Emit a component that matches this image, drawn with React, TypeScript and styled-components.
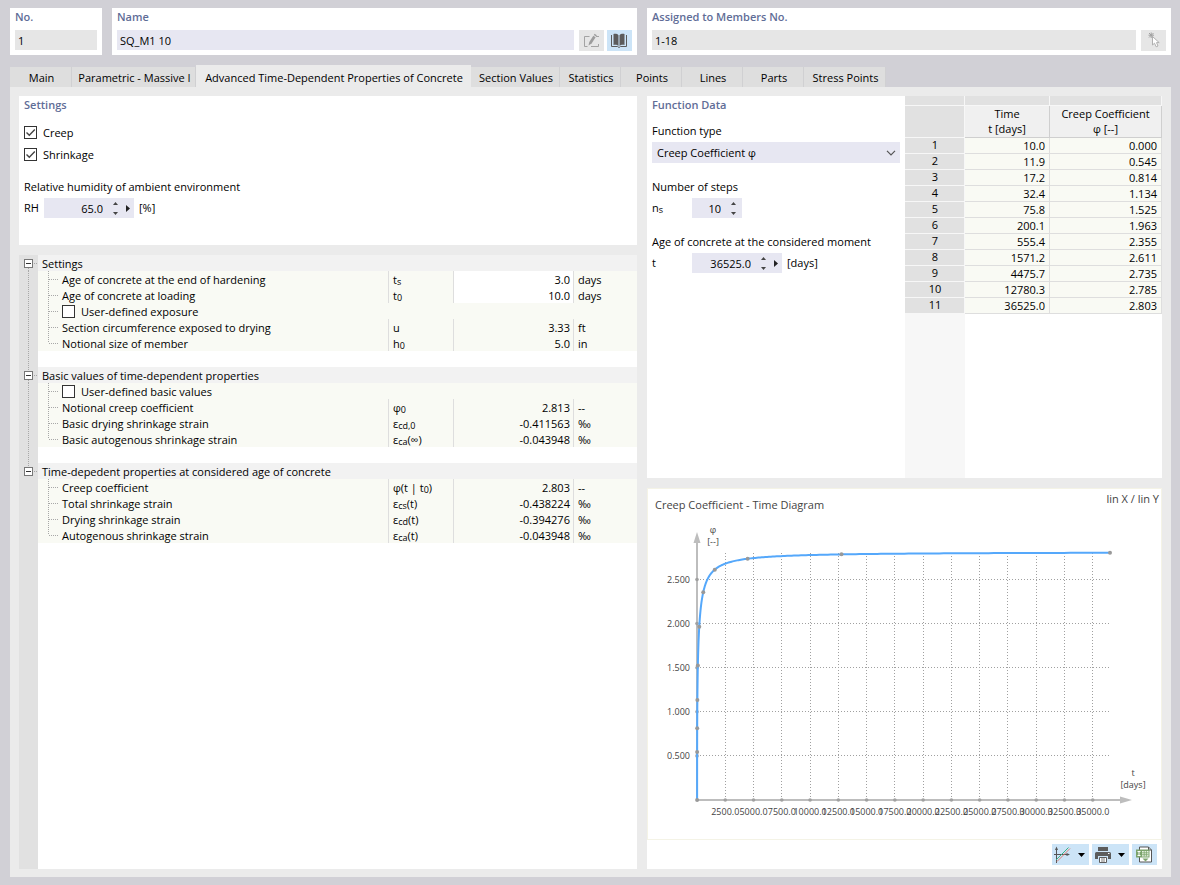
import React, { useState } from "react";
import styled, { createGlobalStyle, css } from "styled-components";

const color = {
  page: "#d1d0d6",
  panel: "#ebebeb",
  tab: "#dedede",
  tabLine: "#d0d0d2",
  title: "#5f6d97",
  field: "#e7e7f2",
  fieldOff: "#e6e6e6",
  active: "#cce4f7",
  head: "#f2f2f2",
  cell: "#f9faf4",
  gutter: "#e1e1e1",
  line: "#dedede",
};

const GlobalStyle = createGlobalStyle`
  *, *::before, *::after { box-sizing: border-box; }
  body {
    margin: 0;
    background: ${color.page};
    color: #000;
    font: 11px/16px "Open Sans", "Noto Sans", sans-serif;
  }
  input, select, button { font: inherit; color: inherit; }
`;

/* ---------- page frame ---------- */

const Page = styled.main`
  display: flex;
  flex-direction: column;
  min-height: 100vh;
  padding: 8px 9px 8px 10px;
`;

const TopBar = styled.header`
  display: grid;
  grid-template-columns: 92px minmax(0, 525fr) minmax(0, 524fr);
  gap: 10px;
`;

const TopCard = styled.section`
  padding: 0 5px 4px;
  background: #fff;
`;

const titleText = css`
  color: ${color.title};
  font-size: 11px;
  font-weight: 600;
  line-height: 18px;
`;

const Title = styled.h2`
  margin: 0;
  ${titleText}
`;

const TitleLabel = styled.label`
  display: block;
  margin-bottom: 4px;
  ${titleText}
`;

const FieldRow = styled.div`
  display: flex;
  align-items: flex-start;
  gap: 3px;
  min-height: 21px;
`;

const TextInput = styled.input<{ $gap?: boolean }>`
  flex: 1;
  min-width: 0;
  height: 20px;
  margin-right: ${(p) => (p.$gap ? 2 : 0)}px;
  padding: 0 3px;
  border: 0;
  background: ${color.field};
  &:read-only { background: ${color.fieldOff}; }
`;

const ToolButton = styled.button<{ $wide?: boolean; $off?: boolean }>`
  display: flex;
  flex: none;
  align-items: center;
  justify-content: center;
  gap: 7px;
  width: ${(p) => (p.$wide ? 37 : 25)}px;
  height: 21px;
  padding: 0 ${(p) => (p.$wide ? 2 : 0)}px 0 0;
  border: 0;
  background: ${(p) => (p.$off ? color.fieldOff : color.active)};
`;

const TabList = styled.nav`
  display: flex;
  align-items: flex-end;
  height: 22px;
  margin-top: 10px;
`;

const Tab = styled.button<{ $width: number; $active?: boolean }>`
  width: ${(p) => p.$width}px;
  height: 20px;
  padding: 2px 0 0 2px;
  overflow: hidden;
  border: 0;
  border-right: 1px solid ${color.tabLine};
  background: ${color.tab};
  text-align: center;
  white-space: nowrap;
  ${(p) =>
    p.$active &&
    css`
      height: 22px;
      padding-top: 4px;
      border-right-color: ${color.panel};
      background: ${color.panel};
    `}
`;

const Workspace = styled.div`
  display: grid;
  flex: 1;
  grid-template-columns: minmax(0, 618fr) minmax(0, 515fr);
  gap: 10px;
  padding: 9px 9px 8px;
  background: ${color.panel};
`;

const Column = styled.div`
  display: flex;
  flex-direction: column;
  gap: 10px;
`;

/* ---------- form parts ---------- */

const SettingsPanel = styled.section`
  min-height: 149px;
  padding: 0 5px;
  background: #fff;
`;

const CheckList = styled.div`
  display: flex;
  flex-direction: column;
  margin: 7px 0 14px;
`;

const CheckLabel = styled.label<{ $dense?: boolean }>`
  display: inline-flex;
  align-items: center;
  gap: 6px;
  height: ${(p) => (p.$dense ? 16 : 22)}px;
`;

const CheckBoxFrame = styled.span`
  display: grid;
  width: 13px;
  height: 13px;
  & > * { grid-area: 1 / 1; }
  & > svg { pointer-events: none; }
`;

const CheckInput = styled.input`
  width: 13px;
  height: 13px;
  margin: 0;
  border: 1px solid #333;
  background: #fff;
  appearance: none;
`;

const Caption = styled.label<{ $gap?: boolean }>`
  display: block;
  margin: ${(p) => (p.$gap ? 16 : 0)}px 0 3px;
`;

const InlineField = styled.div<{ $labelWidth: number }>`
  display: grid;
  grid-template-columns: ${(p) => p.$labelWidth}px max-content 1fr;
  align-items: center;
  height: 20px;
`;

const Unit = styled.span`
  padding-left: 5px;
`;

const SpinBox = styled.span<{ $width: number }>`
  display: flex;
  width: ${(p) => p.$width}px;
  height: 20px;
  background: ${color.field};
`;

const SpinInput = styled.input<{ $width: number }>`
  width: ${(p) => p.$width}px;
  padding: 2px 3px 0 0;
  border: 0;
  background: transparent;
  text-align: right;
`;

const SpinButtons = styled.span`
  display: flex;
  flex-direction: column;
  width: 18px;
`;

const PlainButton = styled.button`
  display: flex;
  flex: 1;
  align-items: center;
  justify-content: center;
  min-width: 0;
  padding: 0;
  border: 0;
  background: none;
`;

const StepMenu = styled(PlainButton)`
  flex: none;
  width: 8px;
`;

const SelectFrame = styled.span`
  display: grid;
  align-items: center;
  width: 100%;
  & > * { grid-area: 1 / 1; }
  & > svg { justify-self: end; margin-right: 4px; pointer-events: none; }
`;

const Select = styled.select`
  width: 100%;
  height: 21px;
  padding: 0 20px 0 5px;
  border: 0;
  border-radius: 0;
  background: ${color.field};
  appearance: none;
`;

/* ---------- property tree ---------- */

const TreePanel = styled.section`
  flex: 1;
  background: linear-gradient(to right, ${color.gutter} 19px, #fff 19px);
`;

const TreeTable = styled.table`
  width: 100%;
  border-collapse: separate;
  border-spacing: 0;
  table-layout: fixed;
  td, th { height: 16px; padding: 0; font-weight: 400; text-align: left; white-space: nowrap; }
  svg { display: block; flex: none; }
`;

const GutterCell = styled.td`
  width: 19px;
`;

const GroupHead = styled.th`
  background: ${color.head};
`;

const GroupTitle = styled.span`
  display: flex;
  align-items: center;
  height: 16px;
  padding: 2px 0 0 4px;
`;

const Cell = styled.td<{ $divided?: boolean; $editable?: boolean; $number?: boolean }>`
  background: ${(p) => (p.$editable ? "#fff" : color.cell)};
  border-left: ${(p) => (p.$divided ? `1px solid ${color.line}` : "0")};
  line-height: 14px;
  ${(p) => p.$divided && !p.$number && css`&& { padding: 2px 0 0 4px; }`}
  ${(p) => p.$number && css`&& { padding: 2px 3px 0 0; text-align: right; }`}
`;

const NameContent = styled.span`
  display: flex;
  align-items: center;
  gap: 2px;
  height: 16px;
`;

const NameText = styled.span`
  padding-top: 2px;
`;

const ToggleButton = styled.button`
  display: block;
  width: 19px;
  height: 16px;
  padding: 0;
  border: 0;
  background: none;
`;

const Sub = styled.sub`
  position: relative;
  top: 1px;
  font-size: 9px;
  line-height: 0;
  vertical-align: baseline;
`;

/* ---------- function data ---------- */

const FunctionPanel = styled.section`
  display: flex;
  min-height: 382px;
  background: #fff;
`;

const FunctionForm = styled.div`
  flex: 1;
  padding: 0 5px;
  & > h2 { margin-bottom: 9px; }
`;

const DataArea = styled.div`
  flex: none;
  width: 257px;
  background: linear-gradient(to right, #f7f7f7 60px, #fff 60px);
`;

const DataTable = styled.table`
  width: 100%;
  border-collapse: separate;
  border-spacing: 0;
  table-layout: fixed;
  th, td { height: 16px; padding: 0; font-weight: 400; line-height: 14px; }
  td {
    padding: 1px 4px 0 0;
    border-right: 1px solid ${color.line};
    border-bottom: 1px solid ${color.line};
    background: ${color.cell};
    text-align: right;
  }
  tbody th {
    padding: 0 0 1px 1px;
    border-right: 1px solid #f7f7f7;
    border-bottom: 1px solid #f7f7f7;
    background: ${color.gutter};
  }
`;

const StripRow = styled.tr`
  && th {
    height: 10px;
    border-right: 1px solid #f7f7f7;
    border-bottom: 1px solid #f7f7f7;
    background: ${color.gutter};
  }
`;

const HeadRow = styled.tr`
  && th {
    height: 32px;
    padding-bottom: 1px;
    border-right: 1px solid #cfcfcf;
    border-bottom: 1px solid #cfcfcf;
    background: #f0f0f0;
    line-height: 15px;
  }
  && th:first-child {
    border-color: #f7f7f7;
    background: ${color.gutter};
  }
`;

/* ---------- diagram ---------- */

const DiagramPanel = styled.section`
  display: flex;
  flex: 1;
  flex-direction: column;
  background: #fff;
`;

const DiagramFrame = styled.div`
  flex: 1;
  border: 1px solid #f4f3e6;
`;

const Diagram = styled.svg`
  display: block;
  width: 100%;
  fill: #444;
  font-size: 9px;
`;

const DiagramTools = styled.div`
  display: flex;
  justify-content: flex-end;
  gap: 3px;
  padding: 4px 5px;
`;

/* ---------- small drawings ---------- */

const UpArrow = () => (
  <svg width="5" height="3" viewBox="0 0 5 3"><path d="M0 3 2.5 0 5 3z" fill="#444" /></svg>
);
const DownArrow = () => (
  <svg width="5" height="3" viewBox="0 0 5 3"><path d="M0 0h5L2.5 3z" fill="#444" /></svg>
);
const RightArrow = () => (
  <svg width="4" height="7" viewBox="0 0 4 7"><path d="M0 0 4 3.5 0 7z" fill="#222" /></svg>
);
const MenuArrow = () => (
  <svg width="7" height="4" viewBox="0 0 7 4"><path d="M0 0h7L3.5 4z" fill="#000" /></svg>
);
const Chevron = () => (
  <svg width="10" height="6" viewBox="0 0 10 6"><path d="M1 .8 5 4.8 9 .8" fill="none" stroke="#555" strokeWidth="1.2" /></svg>
);
const CheckMark = () => (
  <svg width="13" height="13" viewBox="0 0 13 13"><path d="M2.5 6.5 5.3 9.3 10.8 3.5" fill="none" stroke="#444" strokeWidth="1.4" /></svg>
);

const EditIcon = () => (
  <svg width="17" height="15" viewBox="0 0 17 15" fill="none" stroke="#a3a3a3">
    <path d="M6.500 3.500H1.500V13.500H4.500M8 13.500H15.500V11M13 3.500H16" />
    <path d="M5.500 12.500 6.300 9 10.300 2.800 12.600 4.200 8.600 10.500z" fill="#9c9c9c" stroke="none" />
    <path d="M10.800 2 11.600 .8 13.800 2.200 13.100 3.400z" fill="#9c9c9c" stroke="none" />
  </svg>
);

const BookIcon = () => (
  <svg width="17" height="15" viewBox="0 0 17 15">
    <path d="M2.500 1C4.500 .6 6.500 1 7.500 2.200V13C6.500 12 4.500 11.600 2.500 12zM13.500 1C11.500 .6 9.500 1 8.500 2.200V13C9.500 12 11.500 11.600 13.500 12z" fill="#5c5c5c" />
    <path d="M.5 2V13.500H6.500L8 14.500 9.500 13.500H15.500V2" fill="none" stroke="#5c5c5c" />
  </svg>
);

const PickIcon = () => (
  <svg width="13" height="17" viewBox="0 0 13 17">
    <path d="M2 1 6.500 5.500M6.500 1 2 5.500M4.200 .5V6M1.500 3.200H7" stroke="#a0a0a0" fill="none" />
    <path d="M5.500 4.500V13L7.500 11.200 9.200 14.800 11 14 9.500 10.600H12.200z" fill="#fff" stroke="#b0b0b0" />
  </svg>
);

const ScaleIcon = () => (
  <svg width="17" height="17" viewBox="0 0 17 17" fill="none">
    <path d="M2.500 2V17M0 8.500H14" stroke="#555" />
    <path d="M2.500 .5 4 4H1zM16 8.500 12.500 7V10z" fill="#555" />
    <path d="M2 14 14.500 1.500" stroke="#3bb08a" />
    <path d="M3 15.500 16 2.500" stroke="#dd7d72" />
  </svg>
);

const PrintIcon = () => (
  <svg width="16" height="16" viewBox="0 0 16 16">
    <path d="M3 0H13V4H3zM1.500 5H14.500Q16 5 16 6.500V12H13V9H3V12H0V6.500Q0 5 1.500 5z" fill="#5c5c5c" />
    <path d="M13 6.500H14.500" stroke="#fff" />
    <path d="M4.500 10.500H11.500V15.500H4.500z" fill="#fff" stroke="#5c5c5c" />
    <path d="M6 12H10M6 14H10" stroke="#5c5c5c" strokeWidth=".8" />
  </svg>
);

const ExportIcon = () => (
  <svg width="17" height="17" viewBox="0 0 17 17" fill="none">
    <path d="M3.500 1H12.500L15.500 4V16H3.500z" fill="#fff" stroke="#555" />
    <path d="M12.500 1V4H15.500" stroke="#555" />
    <path d="M0 3.500H13.500V11.500H0z" fill="#7ba36c" />
    <path d="M1.500 5.500H4.500M3 5.500V9.500M1.500 9.500H4.500" stroke="#fff" />
    <path d="M6 5H12.500V10.500H6z" fill="#e9f3e4" />
    <path d="M8.200 5V10.500M10.400 5V10.500M6 6.800H12.500M6 8.700H12.500" stroke="#7ba36c" strokeWidth=".8" />
    <path d="M6.500 12.500H12.500L9.500 15.500z" fill="#7ba36c" />
  </svg>
);

const dots = { stroke: "#a8a8a8", strokeDasharray: "1 1", fill: "none" };

const Branch = ({ last }: { last: boolean }) => (
  <svg width="22" height="16" viewBox="0 0 22 16" shapeRendering="crispEdges">
    <path d={last ? "M10.500 0V8" : "M10.500 0V16"} {...dots} />
    <path d="M11 8.500H21" {...dots} />
  </svg>
);

const GutterLine = () => (
  <svg width="19" height="16" viewBox="0 0 19 16" shapeRendering="crispEdges">
    <path d="M9.500 0V16" {...dots} />
  </svg>
);

const ToggleGlyph = ({ first, last }: { first: boolean; last: boolean }) => (
  <svg width="19" height="16" viewBox="0 0 19 16" shapeRendering="crispEdges">
    {!first && <path d="M9.500 0V4" {...dots} />}
    {!last && <path d="M9.500 13V16" {...dots} />}
    <rect x="5.500" y="4.500" width="8" height="8" fill="#fff" stroke="#777" />
    <path d="M7 8.500H12" stroke="#333" />
    <path d="M15 8.500H19" {...dots} />
  </svg>
);

/* ---------- data ---------- */

const tabs: [string, number][] = [
  ["Main", 62],
  ["Parametric - Massive I", 124],
  ["Advanced Time-Dependent Properties of Concrete", 275],
  ["Section Values", 89],
  ["Statistics", 61],
  ["Points", 61],
  ["Lines", 61],
  ["Parts", 61],
  ["Stress Points", 82],
];

type Row = {
  name: string;
  check?: boolean;
  symbol?: React.ReactNode;
  value?: string;
  unit?: string;
  editable?: boolean;
};

const groups: { title: string; rows: Row[] }[] = [
  {
    title: "Settings",
    rows: [
      { name: "Age of concrete at the end of hardening", symbol: <>t<Sub>s</Sub></>, value: "3.0", unit: "days", editable: true },
      { name: "Age of concrete at loading", symbol: <>t<Sub>0</Sub></>, value: "10.0", unit: "days", editable: true },
      { name: "User-defined exposure", check: true },
      { name: "Section circumference exposed to drying", symbol: "u", value: "3.33", unit: "ft" },
      { name: "Notional size of member", symbol: <>h<Sub>0</Sub></>, value: "5.0", unit: "in" },
    ],
  },
  {
    title: "Basic values of time-dependent properties",
    rows: [
      { name: "User-defined basic values", check: true },
      { name: "Notional creep coefficient", symbol: <>φ<Sub>0</Sub></>, value: "2.813", unit: "--" },
      { name: "Basic drying shrinkage strain", symbol: <>ε<Sub>cd,0</Sub></>, value: "-0.411563", unit: "‰" },
      { name: "Basic autogenous shrinkage strain", symbol: <>ε<Sub>ca</Sub>(∞)</>, value: "-0.043948", unit: "‰" },
    ],
  },
  {
    title: "Time-depedent properties at considered age of concrete",
    rows: [
      { name: "Creep coefficient", symbol: <>φ(t | t<Sub>0</Sub>)</>, value: "2.803", unit: "--" },
      { name: "Total shrinkage strain", symbol: <>ε<Sub>cs</Sub>(t)</>, value: "-0.438224", unit: "‰" },
      { name: "Drying shrinkage strain", symbol: <>ε<Sub>cd</Sub>(t)</>, value: "-0.394276", unit: "‰" },
      { name: "Autogenous shrinkage strain", symbol: <>ε<Sub>ca</Sub>(t)</>, value: "-0.043948", unit: "‰" },
    ],
  },
];

const creep: [number, number][] = [
  [10.0, 0], [11.9, 0.545], [17.2, 0.814], [32.4, 1.134], [75.8, 1.525], [200.1, 1.963],
  [555.4, 2.355], [1571.2, 2.611], [4475.7, 2.735], [12780.3, 2.785], [36525.0, 2.803],
];

/* ---------- components ---------- */

function CheckBox({ label, initial = false, dense }: { label: string; initial?: boolean; dense?: boolean }) {
  const [on, setOn] = useState(initial);
  return (
    <CheckLabel $dense={dense}>
      <CheckBoxFrame>
        <CheckInput type="checkbox" checked={on} onChange={() => setOn(!on)} />
        {on && <CheckMark />}
      </CheckBoxFrame>
      <NameText>{label}</NameText>
    </CheckLabel>
  );
}

function Spin({ id, value, width, menu }: { id: string; value: string; width: number; menu?: boolean }) {
  return (
    <SpinBox $width={width}>
      <SpinInput id={id} $width={menu ? width - 28 : width - 18} defaultValue={value} />
      <SpinButtons>
        <PlainButton aria-label="Increase"><UpArrow /></PlainButton>
        <PlainButton aria-label="Decrease"><DownArrow /></PlainButton>
      </SpinButtons>
      {menu && <StepMenu aria-label="More"><RightArrow /></StepMenu>}
    </SpinBox>
  );
}

function PropertyTree() {
  return (
    <TreePanel>
      <TreeTable>
        <colgroup>
          <col width="19" />
          <col />
          <col width="65" />
          <col width="120" />
          <col width="64" />
        </colgroup>
        {groups.map((g, gi) => {
          const lastGroup = gi === groups.length - 1;
          return (
            <tbody key={g.title}>
              <tr>
                <GutterCell>
                  <ToggleButton aria-label={`Collapse ${g.title}`}>
                    <ToggleGlyph first={gi === 0} last={lastGroup} />
                  </ToggleButton>
                </GutterCell>
                <GroupHead colSpan={4} scope="rowgroup">
                  <GroupTitle>{g.title}</GroupTitle>
                </GroupHead>
              </tr>
              {g.rows.map((r, i) => (
                <tr key={r.name}>
                  <GutterCell>{!lastGroup && <GutterLine />}</GutterCell>
                  <Cell colSpan={r.check ? 4 : 1}>
                    <NameContent>
                      <Branch last={i === g.rows.length - 1} />
                      {r.check ? <CheckBox label={r.name} dense /> : <NameText>{r.name}</NameText>}
                    </NameContent>
                  </Cell>
                  {!r.check && (
                    <>
                      <Cell $divided>{r.symbol}</Cell>
                      <Cell $divided $number $editable={r.editable}>{r.value}</Cell>
                      <Cell $divided>{r.unit}</Cell>
                    </>
                  )}
                </tr>
              ))}
              {!lastGroup && (
                <tr>
                  <GutterCell><GutterLine /></GutterCell>
                  <td colSpan={4} />
                </tr>
              )}
            </tbody>
          );
        })}
      </TreeTable>
    </TreePanel>
  );
}

const px = (t: number) => 49 + (t * 413) / 36525;
const py = (v: number) => 311 - v * 88.2;

/* Creep development after EN 1992-1-1, Annex B */
const phi = (t: number) => 2.813 * Math.pow((t - 10) / (437 + t - 10), 0.3);

const curve = Array.from({ length: 241 }, (_, i) => {
  const t = 10 + 36515 * Math.pow(i / 240, 4);
  return `${i ? "L" : "M"}${px(t).toFixed(2)} ${py(phi(t)).toFixed(2)}`;
}).join("");

const xTicks = Array.from({ length: 14 }, (_, i) => (i + 1) * 2500);
const yTicks = [0.5, 1, 1.5, 2, 2.5];

function CreepDiagram() {
  return (
    <Diagram viewBox="0 0 513 350" role="img" aria-label="Creep coefficient over time">
      <text x="7" y="20" fontSize="11">Creep Coefficient - Time Diagram</text>
      <text x="511" y="14" fontSize="11" textAnchor="end">lin X / lin Y</text>
      <text x="65" y="44" textAnchor="middle">φ</text>
      <text x="65" y="56" textAnchor="middle">[--]</text>
      <text x="485" y="287" textAnchor="middle">t</text>
      <text x="485" y="299" textAnchor="middle">[days]</text>
      <g stroke="#a0a0a0" strokeDasharray="1 2">
        {xTicks.map((t) => <path key={t} d={`M${Math.floor(px(t)) + 0.5} 64V311`} />)}
        {yTicks.map((v) => <path key={v} d={`M49 ${Math.floor(py(v)) + 0.5}H462`} />)}
      </g>
      <path d="M49 311V52M49 311H474" stroke="#bdbdbd" strokeWidth="2" />
      <path d="M49 43 52.500 54H45.500zM484 311 472 307.500V314.500z" fill="#bdbdbd" />
      <g fill="#a0a0a0">
        {xTicks.map((t) => <circle key={t} cx={px(t)} cy="311" r="1.8" />)}
        {yTicks.map((v) => <circle key={v} cx="49" cy={py(v)} r="1.8" />)}
      </g>
      <path d={curve} fill="none" stroke="#55a8fb" strokeWidth="2" />
      <g fill="#999">
        {creep.map(([t, v]) => <circle key={t} cx={px(t)} cy={py(v)} r="2" />)}
      </g>
      {yTicks.map((v) => (
        <text key={v} x="42" y={py(v) + 3} textAnchor="end">{v.toFixed(3)}</text>
      ))}
      {xTicks.map((t) => (
        <text key={t} x={px(t)} y="326" textAnchor="middle">{t.toFixed(1)}</text>
      ))}
    </Diagram>
  );
}

export default function App() {
  const [active, setActive] = useState(2);
  return (
    <>
      <GlobalStyle />
      <Page>
        <TopBar>
          <TopCard>
            <TitleLabel htmlFor="no">No.</TitleLabel>
            <FieldRow><TextInput id="no" defaultValue="1" readOnly /></FieldRow>
          </TopCard>
          <TopCard>
            <TitleLabel htmlFor="name">Name</TitleLabel>
            <FieldRow>
              <TextInput id="name" $gap defaultValue="SQ_M1 10" />
              <ToolButton $off aria-label="Edit name"><EditIcon /></ToolButton>
              <ToolButton aria-label="Library"><BookIcon /></ToolButton>
            </FieldRow>
          </TopCard>
          <TopCard>
            <TitleLabel htmlFor="members">Assigned to Members No.</TitleLabel>
            <FieldRow>
              <TextInput id="members" $gap defaultValue="1-18" readOnly />
              <ToolButton $off aria-label="Pick members"><PickIcon /></ToolButton>
            </FieldRow>
          </TopCard>
        </TopBar>

        <TabList>
          {tabs.map(([label, width], i) => (
            <Tab key={label} $width={width} $active={i === active} onClick={() => setActive(i)}>
              {label}
            </Tab>
          ))}
        </TabList>

        <Workspace>
          <Column>
            <SettingsPanel>
              <Title>Settings</Title>
              <CheckList>
                <CheckBox label="Creep" initial />
                <CheckBox label="Shrinkage" initial />
              </CheckList>
              <Caption htmlFor="rh">Relative humidity of ambient environment</Caption>
              <InlineField $labelWidth={20}>
                <label htmlFor="rh">RH</label>
                <Spin id="rh" value="65.0" width={90} menu />
                <Unit>[%]</Unit>
              </InlineField>
            </SettingsPanel>
            <PropertyTree />
          </Column>

          <Column>
            <FunctionPanel>
              <FunctionForm>
                <Title>Function Data</Title>
                <Caption htmlFor="type">Function type</Caption>
                <SelectFrame>
                  <Select id="type" defaultValue="creep">
                    <option value="creep">Creep Coefficient φ</option>
                  </Select>
                  <Chevron />
                </SelectFrame>
                <Caption htmlFor="steps" $gap>Number of steps</Caption>
                <InlineField $labelWidth={40}>
                  <label htmlFor="steps">n<Sub>s</Sub></label>
                  <Spin id="steps" value="10" width={50} />
                </InlineField>
                <Caption htmlFor="age" $gap>Age of concrete at the considered moment</Caption>
                <InlineField $labelWidth={40}>
                  <label htmlFor="age">t</label>
                  <Spin id="age" value="36525.0" width={90} menu />
                  <Unit>[days]</Unit>
                </InlineField>
              </FunctionForm>
              <DataArea>
                <DataTable>
                  <colgroup>
                    <col width="60" />
                    <col width="85" />
                    <col width="112" />
                  </colgroup>
                  <thead>
                    <StripRow><th /><th /><th /></StripRow>
                    <HeadRow>
                      <th />
                      <th scope="col">Time<br />t [days]</th>
                      <th scope="col">Creep Coefficient<br />φ [--]</th>
                    </HeadRow>
                  </thead>
                  <tbody>
                    {creep.map(([t, v], i) => (
                      <tr key={t}>
                        <th scope="row">{i + 1}</th>
                        <td>{t.toFixed(1)}</td>
                        <td>{v.toFixed(3)}</td>
                      </tr>
                    ))}
                  </tbody>
                </DataTable>
              </DataArea>
            </FunctionPanel>

            <DiagramPanel>
              <DiagramFrame><CreepDiagram /></DiagramFrame>
              <DiagramTools>
                <ToolButton $wide aria-label="Axis scaling"><ScaleIcon /><MenuArrow /></ToolButton>
                <ToolButton $wide aria-label="Print"><PrintIcon /><MenuArrow /></ToolButton>
                <ToolButton aria-label="Export to spreadsheet"><ExportIcon /></ToolButton>
              </DiagramTools>
            </DiagramPanel>
          </Column>
        </Workspace>
      </Page>
    </>
  );
}
